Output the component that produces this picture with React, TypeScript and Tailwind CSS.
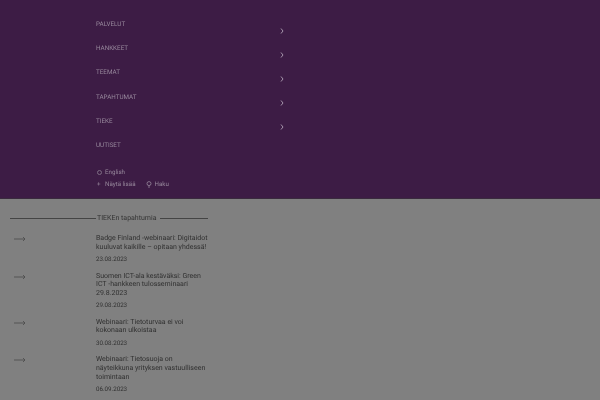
const navItems = ["PALVELUT", "HANKKEET", "TEEMAT", "TAPAHTUMAT", "TIEKE", "UUTISET"];

const events = [
  { title: "Badge Finland -webinaari: Digitaidot kuuluvat kaikille – opitaan yhdessä!", date: "23.08.2023" },
  { title: "Suomen ICT-ala kestäväksi: Green ICT\u00a0-hankkeen tulosseminaari 29.8.2023", date: "29.08.2023" },
  { title: "Webinaari: Tietoturvaa ei voi kokonaan ulkoistaa", date: "30.08.2023" },
  { title: "Webinaari: Tietosuoja on näyteikkuna yrityksen vastuulliseen toimintaan", date: "06.09.2023" },
];

function Chevron() {
  return (
    <svg width="4" height="6" viewBox="0 0 4 6" fill="none" stroke="#a594aa" strokeWidth="1">
      <path d="M1 0.5 L3 3 L1 5.5" />
    </svg>
  );
}

function Arrow() {
  return (
    <svg width="12" height="6" viewBox="0 0 12 6" fill="none" stroke="#4a4a4a" strokeWidth="0.8">
      <path d="M0 3 H11 M9 1 L11 3 L9 5" />
    </svg>
  );
}

export default function App() {
  return (
    <div className="w-[600px] h-[400px] overflow-hidden bg-[#808080] font-['Roboto',sans-serif] [text-rendering:geometricPrecision] blur-[0.3px]">
      {/* Menu */}
      <div className="h-[199px] bg-[#3d1c45] pl-[96px] pt-[13px] border-b border-[#3a2a3e]">
        <div className="w-[188px]">
          {navItems.map((item, i) => (
            <div key={item} className="relative h-[24.2px] text-[6.3px] leading-[23px] text-[#97889c]">
              {item}
              {i < 5 && (
                <span className="absolute right-0 top-[14.5px] flex">
                  <Chevron />
                </span>
              )}
            </div>
          ))}
        </div>
        <div className="mt-[9px] flex items-center gap-[3px] text-[6.2px] leading-[11px] text-[#97889c]">
          <span className="h-[5px] w-[5px] rounded-full border border-[#7d6c83] ml-[1px]" />
          <span>English</span>
        </div>
        <div className="mt-[1px] flex items-center text-[6.2px] leading-[11px] text-[#97889c]">
          <span className="ml-[1px] w-[8px]">+</span>
          <span>Näytä lisää</span>
          <svg className="ml-[10px] mr-[3px]" width="6" height="7" viewBox="0 0 6 7" fill="none" stroke="#97889c" strokeWidth="0.8">
            <circle cx="3" cy="2.6" r="2" />
            <path d="M3 4.6 V7" />
          </svg>
          <span>Haku</span>
        </div>
      </div>

      {/* Events */}
      <div className="w-[198px] ml-[10px] pt-[13px]">
        <div className="flex items-center text-[7px] leading-[12px] text-[#333333]">
          <span className="h-px w-[86px] bg-[#444444]" />
          <span className="ml-[1px]">TIEKEn tapahtumia</span>
          <span className="ml-[3px] h-px flex-1 bg-[#444444]" />
        </div>
        <div className="mt-[10px] flex flex-col gap-[7.4px]">
          {events.map((event) => (
            <div key={event.date} className="flex">
              <div className="w-[86px] shrink-0 pl-[4px] pt-[2px]">
                <Arrow />
              </div>
              <div className="text-[#303030]">
                <div className="text-[7px] leading-[8.6px] w-[112px]">{event.title}</div>
                <div className="mt-[3px] text-[6.2px] leading-[10px]">{event.date}</div>
              </div>
            </div>
          ))}
        </div>
      </div>
    </div>
  );
}
